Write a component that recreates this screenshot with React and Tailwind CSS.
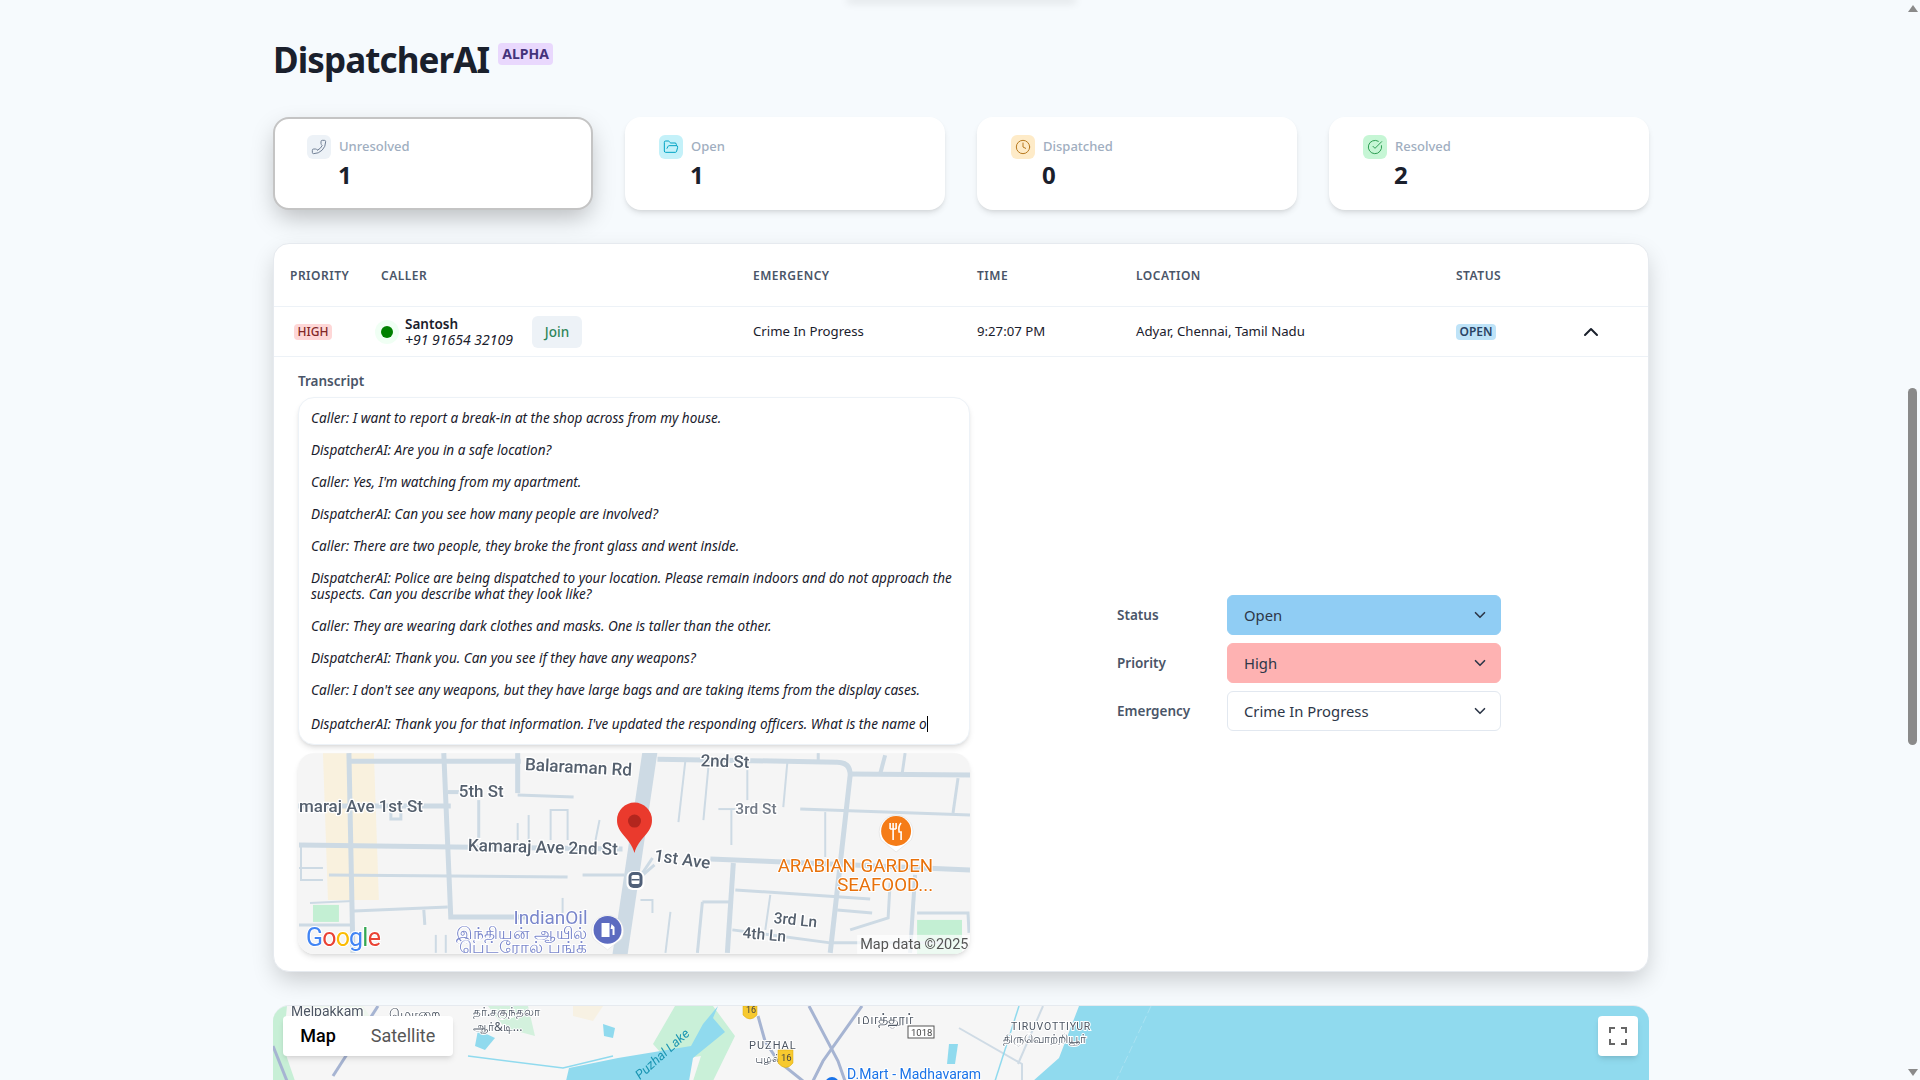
import React from 'react';
import { Phone, FolderOpen, Clock, CircleCheckBig, ChevronUp, ChevronDown } from 'lucide-react';

const stats = [
  { label: 'Unresolved', value: 1, icon: Phone, box: 'bg-[#edf2f7]', color: 'text-[#718096] -scale-x-100', active: true },
  { label: 'Open', value: 1, icon: FolderOpen, box: 'bg-[#c4f1f9]', color: 'text-[#00a3c4]' },
  { label: 'Dispatched', value: 0, icon: Clock, box: 'bg-[#feebc8]', color: 'text-[#b7791f]' },
  { label: 'Resolved', value: 2, icon: CircleCheckBig, box: 'bg-[#c6f6d5]', color: 'text-[#2f9e54]' },
];

const transcript = [
  'Caller: I want to report a break-in at the shop across from my house.',
  'DispatcherAI: Are you in a safe location?',
  "Caller: Yes, I'm watching from my apartment.",
  'DispatcherAI: Can you see how many people are involved?',
  'Caller: There are two people, they broke the front glass and went inside.',
  'DispatcherAI: Police are being dispatched to your location. Please remain indoors and do not approach the suspects. Can you describe what they look like?',
  'Caller: They are wearing dark clothes and masks. One is taller than the other.',
  'DispatcherAI: Thank you. Can you see if they have any weapons?',
  "Caller: I don't see any weapons, but they have large bags and are taking items from the display cases.",
];

const selects = [
  { label: 'Status', value: 'Open', cls: 'bg-[#90cdf4] border-[#90cdf4]' },
  { label: 'Priority', value: 'High', cls: 'bg-[#feb2b2] border-[#feb2b2]' },
  { label: 'Emergency', value: 'Crime In Progress', cls: 'bg-white border-[#e2e8f0]' },
];

// street map pieces, in map pixels: [width, points]
const roads = [
  [15, '353,-5 322,205'],
  [5, '50,8 223,8'], [5, '51,0 55,200'], [5, '146,0 153,164 230,164'], [5, '220,0 220,40'],
  [4, '150,39 163,39'], [3, '220,42 276,44'], [5, '0,53 153,53'], [3, '93,53 93,66 103,66 103,55'],
  [5, '1,92 325,96'], [2, '1,115 25,115'], [2, '3,92 3,127 25,127'], [3, '31,122 270,124'], [3, '285,122 327,122'],
  [3, '181,47 181,85'], [2, '220,70 220,87'], [2, '231,62 231,87'], [2, '253,87 253,57 270,57 270,87'],
  [2, '302,67 298,87'], [2, '265,145 265,160'], [2, '12,150 55,148'], [3, '56,158 150,154'], [3, '126,157 127,172'],
  [3, '1,172 55,172'], [2, '138,182 138,200'], [2, '148,182 148,200'],
  [5, '360,6 540,9 Q553,9 553,22 L533,200'], [5, '553,21 673,22'], [3, '661,25 656,60'], [3, '503,56 673,62'],
  [2, '411,14 406,67'], [2, '388,7 381,69'], [2, '490,10 486,54'], [2, '450,17 450,47'], [2, '421,56 438,56'],
  [2, '434,57 434,92'], [2, '528,59 528,104'], [5, '413,106 673,117'], [5, '436,110 430,200'],
  [3, '438,137 573,146'], [3, '540,157 575,160'], [3, '405,149 433,149'], [3, '405,149 400,200'], [2, '373,159 368,200'],
  [2, '473,142 468,177'], [3, '435,177 533,190 650,190'], [3, '593,130 591,165 553,177'], [4, '618,122 613,200'],
  [3, '620,160 671,160 672,180'], [2, '343,147 355,147 355,160'], [4, '588,2 583,21'], [3, '608,0 605,21'], [3, '521,0 521,7'],
  [3, '355,105 345,120'], [3, '357,112 342,125'],
];

const labels = [
  { t: 'Balaraman Rd', x: 227, y: 17, s: 17.2, r: 3 },
  { t: '5th St', x: 161, y: 44, s: 17, r: 0 },
  { t: 'maraj Ave 1st St', x: 1, y: 59, s: 17, r: 0 },
  { t: 'Kamaraj Ave 2nd St', x: 170, y: 98, s: 17.2, r: 1.5 },
  { t: '2nd St', x: 403, y: 13, s: 17, r: 2 },
  { t: '3rd St', x: 438, y: 61, s: 15.5, r: 0, c: '#727a86' },
  { t: '1st Ave', x: 356, y: 108, s: 17, r: 8 },
  { t: '3rd Ln', x: 476, y: 170, s: 15.5, r: 6 },
  { t: '4th Ln', x: 445, y: 185, s: 15.5, r: 5 },
];

function StreetMap() {
  return (
    <svg viewBox="0 0 673 201" className="block w-full h-[201px] blur-[0.5px]" fontFamily="Roboto, sans-serif">
      <rect width="673" height="201" fill="#f5f5f5" />
      <polygon points="25,0 76,0 81,147 30,147" fill="#f9f1de" />
      <rect x="15" y="152" width="26" height="17" fill="#c3efd3" />
      <rect x="620" y="167" width="45" height="34" fill="#c3efd3" />
      {roads.map(([w, p], i) => (
        <path key={i} d={`M${p}`} fill="none" stroke="#cddae4" strokeWidth={w} />
      ))}
      {labels.map((l) => (
        <text key={l.t} x={l.x} y={l.y} fontSize={l.s} fontWeight="500" fill={l.c || '#55606e'} stroke="#fff" strokeWidth="2.5" paintOrder="stroke" transform={`rotate(${l.r} ${l.x} ${l.y})`}>
          {l.t}
        </text>
      ))}
      <g fontSize="18.700" fill="#e8710a" stroke="#fff" strokeWidth="2" paintOrder="stroke" textAnchor="end">
        <text x="636" y="119">ARABIAN GARDEN</text>
        <text x="636" y="138">SEAFOOD...</text>
      </g>
      <g fill="#7986cb" stroke="#fff" strokeWidth="2" paintOrder="stroke" textAnchor="end">
        <text x="290" y="171" fontSize="19">IndianOil</text>
        <text x="289" y="186" fontSize="17.500" fontFamily="'Noto Sans', sans-serif">இந்தியன் ஆயில்</text>
        <text x="289" y="200" fontSize="17.500" fontFamily="'Noto Sans', sans-serif">பெட்ரோல் பங்க்</text>
      </g>
      {/* gas pin */}
      <path d="M296,186 A16,16 0 1 1 324,186 L310,197 Z" fill="#fff" stroke="#e2e2e2" strokeWidth="0.6" />
      <circle cx="310" cy="177" r="14" fill="#5c6bc0" />
      <path d="M304,170 h8 v14 h-8 z M314,171 l3,3 v8 h-2 v-6 h-2" fill="#fff" />
      {/* food pin */}
      <path d="M584,87 A17,17 0 1 1 614,87 L599,99 Z" fill="#fff" stroke="#dedede" strokeWidth="0.6" />
      <circle cx="599" cy="78" r="15" fill="#f57c17" />
      <path d="M593,70 v6 M596,70 v6 M599,70 v6 M593,76 h6 M596,76 v11 M604,70 q-3,3 -2,9 h2 v8" fill="none" stroke="#fff" strokeWidth="1.6" />
      {/* bus stop */}
      <rect x="329" y="118" width="18" height="19" rx="6" fill="#fff" />
      <rect x="331" y="119" width="14" height="16" rx="5" fill="#4f5f78" />
      <rect x="334" y="122" width="8" height="9" rx="1.5" fill="#fff" />
      <rect x="334" y="126" width="8" height="1.5" fill="#4f5f78" />
      {/* location pin */}
      <path d="M337,100 C333,85 319,80 319.500,67 A17.500,17.500 0 0 1 354.500,67 C355,80 341,85 337,100 Z" fill="#ea3a2d" />
      <circle cx="337" cy="68" r="6.500" fill="#b3261e" />
      <text x="8" y="193" fontSize="25" fontWeight="400" textLength="75" stroke="#fff" strokeWidth="2" paintOrder="stroke">
        <tspan fill="#4285f4">G</tspan><tspan fill="#ea4335">o</tspan><tspan fill="#fbbc05">o</tspan><tspan fill="#4285f4">g</tspan><tspan fill="#34a853">l</tspan><tspan fill="#ea4335">e</tspan>
      </text>
      <rect x="560" y="182" width="113" height="19" fill="#fff" fillOpacity="0.7" />
      <text x="563" y="196" fontSize="14.500" fill="#555">Map data ©2025</text>
    </svg>
  );
}

function RegionMap() {
  return (
    <svg viewBox="0 0 1376 75" className="block w-full h-[75px] blur-[0.3px]" fontFamily="Roboto, sans-serif">
      <rect width="1376" height="75" fill="#f6f6f6" />
      <polygon points="0,0 14,0 10,40 22,75 0,75" fill="#c7efd6" />
      <polygon points="30,0 90,0 110,30 60,45 40,20" fill="#eef6ee" />
      <polygon points="215,0 255,0 262,30 232,22" fill="#d3f1dd" />
      <polygon points="300,0 330,0 320,15 300,10" fill="#f7f1e3" />
      <polygon points="402,0 440,0 462,30 440,75 420,75 428,50 395,55 380,38" fill="#c9f0d8" />
      <polygon points="445,0 430,18 418,40 345,52 296,62 293,75 416,75 420,52 452,26 440,12" fill="#90daee" />
      <polygon points="330,18 342,22 340,32 331,30" fill="#90daee" />
      <polygon points="205,24 222,32 212,44 202,40" fill="#90daee" />
      <polygon points="806,0 1376,0 1376,75 760,75 786,52" fill="#90daee" />
      <polygon points="676,38 685,38 682,58 674,58" fill="#90daee" />
      <path d="M878,0 L843,75" fill="none" stroke="#a9e2f2" strokeWidth="1" strokeDasharray="8 3" />
      <g fill="none" stroke="#a6b4d2" strokeWidth="3">
        <path d="M105,0 L60,70" />
        <path d="M0,40 L14,75" />
        <path d="M536,0 L565,55 L572,75" />
        <path d="M589,0 L550,55 L540,75" />
        <path d="M485,10 L492,35 L505,55 L530,75" />
      </g>
      <g fill="none" stroke="#cfdbe5" strokeWidth="2">
        <path d="M686,22 L749,58 L749,75" />
        <path d="M770,0 L745,58" />
        <path d="M195,50 L290,62 L340,50" stroke="#90daee" strokeWidth="1.5" />
      </g>
      <path d="M746,0 L722,75" fill="none" stroke="#90daee" strokeWidth="1.5" />
      <g fontSize="14" fill="#4d5663" stroke="#fff" strokeWidth="2" paintOrder="stroke">
        <text x="18" y="10">Melpakkam</text>
        <text x="113" y="-1">Morai</text>
        <text x="116" y="13" fontSize="14" fontFamily="'Noto Sans', sans-serif">மொறை</text>
        <text x="200" y="10" fontSize="12" fontFamily="'Noto Sans', sans-serif">தர்.சகுந்தலா</text>
        <text x="200" y="25" fontSize="12" fontFamily="'Noto Sans', sans-serif">ஆர்&amp;டி...</text>
        <text x="476" y="43" fontSize="11" letterSpacing="1">PUZHAL</text>
        <text x="482" y="56" fontSize="11" fontFamily="'Noto Sans', sans-serif">புழல்</text>
        <text x="584" y="18" fontSize="16" fontFamily="'Noto Sans', sans-serif">மாத்தூர்</text>
        <text x="738" y="24" fontSize="10.500" letterSpacing="0.8">TIRUVOTTIYUR</text>
        <text x="730" y="37" fontSize="12" fontFamily="'Noto Sans', sans-serif">திருவொற்றியூர்</text>
      </g>
      <text x="367" y="74" fontSize="13" fill="#1a95b2" fontStyle="italic" transform="rotate(-42 367 74)">Puzhal Lake</text>
      <rect x="635" y="20" width="26" height="12" fill="#fff" stroke="#555" strokeWidth="1" />
      <text x="638" y="30" fontSize="9.500" fill="#444">1018</text>
      <path d="M470,0 h14 v9 q-7,8 -14,0 Z" fill="#f7c92f" stroke="#d9a90f" strokeWidth="0.5" />
      <text x="473" y="7" fontSize="9" fill="#444">16</text>
      <path d="M505,44 h15 v13 q-7,9 -15,0 Z" fill="#f7c92f" stroke="#d9a90f" strokeWidth="0.5" />
      <text x="508" y="55" fontSize="9.500" fill="#444">16</text>
      <circle cx="559" cy="78" r="7" fill="#1a73e8" />
      <text x="574" y="73" fontSize="14" fill="#1a73e8" stroke="#fff" strokeWidth="2" paintOrder="stroke">D.Mart - Madhavaram</text>
    </svg>
  );
}

export default function App() {
  return (
    <div className="flex h-screen overflow-hidden bg-[#f6fafd] font-['Noto_Sans',sans-serif] text-[#1a202c]">
      <div className="flex-1 min-w-0">
        <div className="ml-[850px] w-[223px] h-0 shadow-[0_0_8px_3px_rgba(0,0,0,0.1)]" />

        <div className="ml-[273px] w-[1376px]">
          {/* Title */}
          <div className="flex items-start pt-[38px] h-[117px]">
            <h1 className="text-[35px] leading-[44px] font-bold tracking-[-0.9px]">DispatcherAI</h1>
            <span className="ml-[9px] mt-[5px] h-[22px] px-1 rounded-sm bg-[#e9d8fd] text-[#44337a] text-[14px] leading-[22px] font-bold">ALPHA</span>
          </div>

          {/* Stat cards */}
          <div className="grid grid-cols-4 gap-8">
            {stats.map((s) => {
              const Icon = s.icon;
              return (
                <div
                  key={s.label}
                  className={`h-[93px] rounded-2xl border-2 bg-white pl-8 pt-4 ${s.active ? 'border-[#c4c4c4] shadow-[0_10px_25px_-3px_rgba(0,0,0,0.25)]' : 'border-white shadow-md'}`}
                >
                  <div className="flex items-center gap-2">
                    <div className={`flex w-6 h-6 items-center justify-center rounded-md ${s.box}`}>
                      <Icon className={`w-4 h-4 ${s.color}`} strokeWidth={1.5} />
                    </div>
                    <span className="text-[13px] font-medium text-[#a0aec0]">{s.label}</span>
                  </div>
                  <div className="pl-[31px] text-2xl leading-8 font-bold">{s.value}</div>
                </div>
              );
            })}
          </div>

          {/* Calls table */}
          <div className="mt-[33px] rounded-2xl border border-[#e6eaef] bg-white shadow-[0_10px_25px_-3px_rgba(0,0,0,0.2)]">
            <div className="grid grid-cols-[91px_372px_224px_159px_320px_111px_1fr] h-[63px] items-center pl-4 pt-[2px] border-b border-[#edf2f7] text-xs font-semibold tracking-[0.5px] text-[#4a5568]">
              <div>PRIORITY</div>
              <div>CALLER</div>
              <div>EMERGENCY</div>
              <div>TIME</div>
              <div>LOCATION</div>
              <div>STATUS</div>
              <div />
            </div>

            <div className="grid grid-cols-[91px_372px_224px_159px_320px_111px_1fr] h-[50px] items-center pl-4 pt-[1px] border-b border-[#edf2f7] text-[13.2px]">
              <div className="pl-1">
                <span className="block w-[38px] h-4 rounded-sm bg-[#fed7d7] text-center text-xs leading-4 font-medium text-[#822727]">HIGH</span>
              </div>
              <div className="flex items-center">
                <div className="flex w-6 h-6 -ml-[6px] items-center justify-center rounded-full bg-[#f0fff4]">
                  <div className="w-3 h-3 rounded-full bg-[#008000]" />
                </div>
                <div className="ml-[6px] w-[127px] leading-4">
                  <div className="text-[13.5px] font-semibold">Santosh</div>
                  <div className="text-[14px] italic">+91 91654 32109</div>
                </div>
                <button className="w-[50px] h-8 rounded-md bg-[#edf2f7] text-[13.5px] font-medium text-[#2f855a]">Join</button>
              </div>
              <div>Crime In Progress</div>
              <div>9:27:07 PM</div>
              <div>Adyar, Chennai, Tamil Nadu</div>
              <div>
                <span className="block w-[40px] h-4 rounded-sm bg-[#bee3f8] text-center text-xs leading-4 font-semibold text-[#2a4365]">OPEN</span>
              </div>
              <div className="pl-[12px]">
                <ChevronUp className="w-6 h-6 text-[#1a202c]" strokeWidth={2} />
              </div>
            </div>

            {/* Expanded row */}
            <div className="flex pl-6 pt-[14px] pb-[17px]">
              <div className="w-[672px]">
                <div className="h-5 text-[13.5px] leading-5 font-semibold text-[#4a5568]">Transcript</div>
                <div className="mt-[6px] h-[348px] rounded-2xl border border-[#edf2f7] bg-white px-3 pt-3 text-[13.55px] leading-4 italic shadow-md">
                  {transcript.map((line) => (
                    <p key={line} className="mb-4">{line}</p>
                  ))}
                  <p className="mt-[18px] whitespace-nowrap">
                    DispatcherAI: Thank you for that information. I've updated the responding officers. What is the name o
                    <span className="inline-block w-px h-4 align-top bg-black" />
                  </p>
                </div>
                <div className="mt-2 rounded-2xl overflow-hidden shadow-md">
                  <StreetMap />
                </div>
              </div>

              <div className="flex flex-1 items-center justify-center">
                <div className="w-[384px] space-y-2">
                  {selects.map((s) => (
                    <div key={s.label} className="flex items-center">
                      <span className="w-[110px] pt-[1px] text-[13.5px] font-semibold text-[#4a5568]">{s.label}</span>
                      <div className={`flex flex-1 h-10 items-center justify-between rounded-md border pl-4 pr-[11px] pt-[1px] text-[14.8px] text-[#2d3748] ${s.cls}`}>
                        {s.value}
                        <ChevronDown className="w-[18px] h-[18px]" strokeWidth={2.2} />
                      </div>
                    </div>
                  ))}
                </div>
              </div>
            </div>
          </div>

          {/* Region map */}
          <div className="relative mt-[33px] h-[75px] overflow-hidden rounded-t-2xl border-t border-[#e6eaef]">
            <RegionMap />
            <div className="absolute left-[10px] top-[10px] flex h-10 rounded-sm bg-white font-['Roboto',sans-serif] text-lg leading-10 shadow-md">
              <span className="w-[70px] text-center font-medium text-black">Map</span>
              <span className="w-[100px] text-center text-[#565656]">Satellite</span>
            </div>
            <div className="absolute right-[11px] top-[10px] flex w-10 h-10 items-center justify-center rounded-sm bg-white shadow-md">
              <svg viewBox="0 0 18 18" className="w-[18px] h-[18px]" fill="#666">
                <path d="M0 0h6v2H2v4H0zM12 0h6v6h-2V2h-4zM0 12h2v4h4v2H0zM16 12h2v6h-6v-2h4z" />
              </svg>
            </div>
          </div>
        </div>
      </div>

      {/* Scrollbar */}
      <div className="flex w-[15px] shrink-0 flex-col items-center pt-[5px] pb-[4px]">
        <div className="w-0 h-0 border-x-[5px] border-b-[7px] border-x-transparent border-b-[#8a8a8a]" />
        <div className="mt-[376px] w-[9px] h-[357px] rounded-full bg-[#8a8a8a]" />
        <div className="mt-auto w-0 h-0 border-x-[5px] border-t-[7px] border-x-transparent border-t-[#8a8a8a]" />
      </div>
    </div>
  );
}
